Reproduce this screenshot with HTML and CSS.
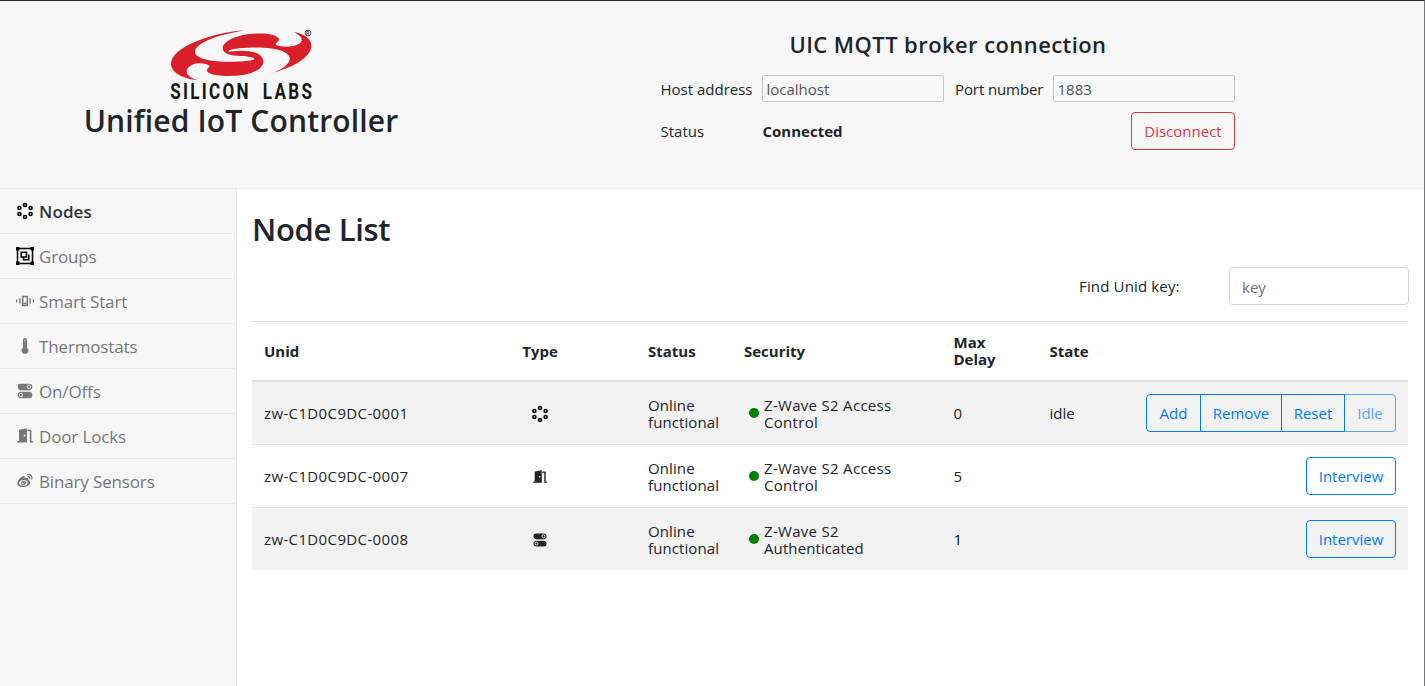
FILE: index.html
```html
<!DOCTYPE html>
<html lang="en">
<head>
<meta charset="utf-8">
<title>Unified IoT Controller</title>
<link rel="stylesheet" href="styles.css">
</head>
<body>
<svg class="defs" aria-hidden="true">
  <symbol id="i-nodes" viewBox="0 0 18 18"><g fill="none" stroke="#000" stroke-width="1.6"><circle cx="9" cy="3" r="1.5"/><circle cx="14.600" cy="6" r="1.500"/><circle cx="14.600" cy="12" r="1.500"/><circle cx="9" cy="15" r="1.500"/><circle cx="3.400" cy="12" r="1.500"/><circle cx="3.400" cy="6" r="1.500"/></g></symbol>
  <symbol id="i-groups" viewBox="0 0 18 18"><path d="M1.500 1.500h15v15h-15z" fill="none" stroke="#000" stroke-width="1.500"/><path d="M0 0h3.500v3.500H0zM14.500 0H18v3.500h-3.500zM0 14.500h3.500V18H0zM14.500 14.500H18V18h-3.500z" fill="#000"/><path d="M5.200 5.200h5.300v4.800H5.200zM12.800 7.500v5.200H7.500V10" fill="none" stroke="#000" stroke-width="1.500"/></symbol>
  <symbol id="i-smart" viewBox="0 0 18 18"><path d="M6.700 4.500h4.600v9H6.700z" fill="none" stroke="currentColor" stroke-width="1.500" stroke-linejoin="round"/><path d="M7.500 11.500h3M3.900 6.200v5.600M14.100 6.200v5.600M.6 7.500v3M17.400 7.500v3" fill="none" stroke="currentColor" stroke-width="1.300"/></symbol>
  <symbol id="i-thermo" viewBox="0 0 18 18"><path d="M7 3a2 2 0 0 1 4 0v7.500a3.500 3.500 0 1 1-4 0z" fill="currentColor"/><path d="M9 2.500v2" stroke="#ddd"/></symbol>
  <symbol id="i-onoff" viewBox="0 0 18 18"><rect x="1.700" y="1.700" width="14.600" height="6.200" rx="3.100" fill="currentColor"/><rect x="1.700" y="10" width="14.600" height="6.200" rx="3.100" fill="currentColor"/><circle cx="13" cy="4.800" r="1.700" fill="none" stroke="#eee"/><circle cx="5" cy="13.100" r="1.700" fill="none" stroke="#eee"/><path d="M4 8.900h10" stroke="currentColor" stroke-width=".6"/></symbol>
  <symbol id="i-door" viewBox="0 0 18 18"><path d="M3 2.800 11 1.300V15.500H1.300v-1.500H3zM11.500 2.800h3.900v11.200h1.400v1.500h-3V4.300h-2.300z" fill="currentColor"/><circle cx="8.600" cy="8.700" r=".9" fill="#fff"/></symbol>
  <symbol id="i-sensor" viewBox="0 0 18 18"><path fill-rule="evenodd" fill="currentColor" d="M7 4.200c1.200-.4 2.200.4 1.700 2 2.200-.8 4.300-.4 3.600 1.700 4 1.300 2.100 6.900-5 7.100C3 15.100 1.300 13 1.400 11.200 1.500 8.500 4.700 5 7 4.200zM7.300 8c-2.600.2-4.300 1.600-4.200 3.300.2 1.500 2 2.600 4.400 2.400 2.600-.2 4.400-1.700 4.200-3.300C11.500 8.800 9.700 7.800 7.300 8z"/><path fill-rule="evenodd" fill="currentColor" d="M7.600 8.700c1.800 0 2.800 1.500 2.200 2.900-.7 1.500-2.700 2-4 1.200-1.200-.7-1.200-2.200-.4-3.100.6-.7 1.400-1 2.200-1zM6.500 10.500a1 1 0 1 0 .1 2 1 1 0 0 0-.1-2z"/><path d="M11.500 2.500c3-.6 5.200 1.800 4.300 4.700M11.900 4.700c1.400-.3 2.300.8 1.900 2" fill="none" stroke="currentColor" stroke-width="1.100" stroke-linecap="round"/></symbol>
</svg>
<div class="app">
  <header class="header">
    <div class="brand">
      <svg class="logo" viewBox="0 0 495 255">
        <path fill="#da1f2b" d="M255 31C165 36 33 80 33 132C33 158 70 177 112 180C85 172 75 158 82 146C90 134 108 128 124 130C138 132 152 136 148 141C142 146 136 150 146 158C165 170 220 169 250 165C290 158 311 140 310 124C308 104 285 92 240 92C220 92 205 97 205 94C208 84 290 80 330 85C385 91 397 112 385 128C375 143 350 155 325 161C400 145 454 110 454 78C454 55 432 42 402 36C425 48 432 60 418 71C400 82 365 82 350 76C340 71 358 66 357 57C350 42 310 38 270 42C225 47 188 65 188 85C189 103 215 107 240 108C265 109 283 112 283 117C280 124 220 126 190 125C140 124 105 112 105 96C105 70 170 45 255 31Z"/>
        <circle cx="444" cy="39" r="8.500" fill="none" stroke="#444" stroke-width="3"/>
        <text class="reg" x="439" y="44">R</text>
        <text class="word" transform="translate(31 237) scale(.8 1)" textLength="293">SILICON</text>
        <text class="word" transform="translate(308 237) scale(.8 1)" textLength="185">LABS</text>
      </svg>
      <h1 class="title">Unified IoT Controller</h1>
    </div>
    <section class="broker">
      <h2 class="broker-title">UIC MQTT broker connection</h2>
      <div class="broker-row">
        <label class="lbl-host">Host address</label><input class="field" value="localhost" disabled>
        <label class="lbl-port">Port number</label><input class="field" value="1883" disabled>
      </div>
      <div class="broker-row status-row">
        <span class="lbl-host">Status</span><b class="connected">Connected</b>
        <button class="btn danger">Disconnect</button>
      </div>
    </section>
  </header>
  <div class="body">
    <nav class="side">
      <a class="item active"><svg><use href="#i-nodes"/></svg><span>Nodes</span></a>
      <a class="item"><svg><use href="#i-groups"/></svg><span>Groups</span></a>
      <a class="item"><svg><use href="#i-smart"/></svg><span>Smart Start</span></a>
      <a class="item"><svg><use href="#i-thermo"/></svg><span>Thermostats</span></a>
      <a class="item"><svg><use href="#i-onoff"/></svg><span>On/Offs</span></a>
      <a class="item"><svg><use href="#i-door"/></svg><span>Door Locks</span></a>
      <a class="item"><svg><use href="#i-sensor"/></svg><span>Binary Sensors</span></a>
    </nav>
    <main class="main">
      <h2 class="page-title">Node List</h2>
      <div class="search"><label>Find Unid key:</label><input class="key" placeholder="key"></div>
      <div class="table">
        <div class="row head"><span>Unid</span><span class="type">Type</span><span>Status</span><span>Security</span><span>Max<br>Delay</span><span>State</span><span></span></div>
        <div class="row odd"><span class="unid">zw-C1D0C9DC-0001</span><span class="type"><svg class="big"><use href="#i-nodes"/></svg></span><span class="status">Online<br>functional</span><span class="sec"><i class="dot"></i><span>Z-Wave S2 Access<br>Control</span></span><span>0</span><span>idle</span>
          <span class="actions"><span class="group"><button class="btn add">Add</button><button class="btn remove">Remove</button><button class="btn reset">Reset</button><button class="btn off" disabled>Idle</button></span></span></div>
        <div class="row"><span class="unid">zw-C1D0C9DC-0007</span><span class="type"><svg><use href="#i-door"/></svg></span><span class="status">Online<br>functional</span><span class="sec"><i class="dot"></i><span>Z-Wave S2 Access<br>Control</span></span><span>5</span><span></span><span class="actions"><button class="btn">Interview</button></span></div>
        <div class="row odd"><span class="unid">zw-C1D0C9DC-0008</span><span class="type"><svg><use href="#i-onoff"/></svg></span><span class="status">Online<br>functional</span><span class="sec"><i class="dot"></i><span>Z-Wave S2<br><span class="auth">Authenticated</span></span></span><span class="navy">1</span><span></span><span class="actions"><button class="btn">Interview</button></span></div>
      </div>
    </main>
  </div>
</div>
</body>
</html>
```
FILE: styles.css
```css
* { box-sizing: border-box; }
body { margin: 0; font: 15px/24px "Open Sans", sans-serif; color: #212529; background: #fff; letter-spacing: 0; }
h1, h2 { margin: 0; font-weight: 600; }
.defs { position: absolute; width: 0; height: 0; }
.app { height: 686px; display: flex; flex-direction: column; border-top: 1px solid #29272b; border-right: 1px solid #77777a; overflow: hidden; }
.header { height: 188px; flex: none; display: flex; background: #f7f7f7; border-bottom: 1px solid #ebebeb; }
.brand { width: 482px; padding-top: 19px; display: flex; flex-direction: column; align-items: center; }
.logo { width: 165px; height: 85px; display: block; margin-left: 3px; }
.reg { font: bold 14px Roboto, sans-serif; fill: #444; letter-spacing: 0; }
.word { font: 700 64px Roboto, sans-serif; fill: #161616; letter-spacing: 0; }
.title { font-size: 30px; line-height: 38px; margin-top: -3px; white-space: nowrap; letter-spacing: 0.15px; }
.broker { margin-left: 178px; width: 575px; padding-top: 29px; }
.broker-title { font-size: 22px; line-height: 29px; text-align: center; margin-left: 1px; letter-spacing: 0.42px; }
.broker-row { display: flex; align-items: center; margin-top: 16px; white-space: nowrap; }
.status-row { margin-top: 10px; }
.lbl-host { width: 102px; padding-left: 0.5px; }
.lbl-port { width: 109px; padding-left: 11px; letter-spacing: -0.1px; }
input, button { font: inherit; letter-spacing: inherit; color: inherit; }
.field { width: 182px; height: 27px; padding: 0 3.5px; border: 1px solid #c8c8c8; border-radius: 2px; background: #f7f7f7; color: #545454; }
.connected { font-weight: 700; padding-left: 0.5px; }
.btn { height: 38px; padding: 0 12px; border: 1px solid #007bff; border-radius: 4px; background: transparent; color: #007bff; white-space: nowrap; }
.danger { border-color: #dc3545; color: #dc3545; margin-left: auto; width: 104px; }
.body { flex: 1; display: flex; }
.side { width: 237px; flex: none; background: #f7f7f7; border-right: 1px solid #ebebeb; }
.item { height: 45px; display: flex; align-items: center; gap: 5px; padding-left: 16px; border-bottom: 1px solid #ebebeb; font-size: 17px; color: #777; letter-spacing: -0.15px; }
.item svg { width: 18px; height: 18px; }
.item span { padding-top: 2px; }
.active { font-weight: 600; color: #333; letter-spacing: 0.1px; }
.main { flex: 1; min-width: 0; padding: 20px 16px 0 15px; }
.page-title { font-size: 31px; line-height: 40px; letter-spacing: -0.35px; }
.search { display: flex; justify-content: flex-end; align-items: center; margin: 18px -1px 16px 0; }
.search label { width: 150px; letter-spacing: 0.15px; }
.key { width: 180px; height: 38px; border: 1px solid #ced4da; border-radius: 4px; padding: 2px 12px 0; }
.key::placeholder { color: #6c757d; opacity: 1; }
.row { display: grid; grid-template-columns: 228px 156px 96px 209.5px 96px 90px minmax(0, 1fr); align-items: center; height: 63px; padding: 0 12px; border-top: 1px solid #dee2e6; line-height: 17px; }
.head { height: 61px; font-weight: 700; border-bottom: 2px solid #dee2e6; }
.head + .row { border-top: 0; height: 62px; }
.odd { background: #f2f2f2; }
.unid { letter-spacing: 0.37px; }
.status { padding-top: 1px; letter-spacing: 0.1px; }
.type { text-align: center; padding-right: 60px; }
.type svg { width: 16px; height: 16px; display: inline-block; vertical-align: middle; }
.type .big { width: 18px; height: 18px; margin-top: 1px; }
.sec { display: flex; align-items: center; padding-left: 5px; gap: 5px; letter-spacing: 0.3px; }
.sec > span { padding-top: 1px; }
.auth { letter-spacing: 0.1px; }
.dot { width: 10px; height: 10px; border-radius: 50%; background: #008000; }
.navy { color: #000080; }
.actions { display: flex; justify-content: flex-end; }
.actions > .btn { width: 90px; padding: 0; }
.group { display: flex; }
.group .btn { border-radius: 0; margin-left: -1px; padding: 0; }
.group .add { border-radius: 4px 0 0 4px; margin-left: 0; width: 55px; }
.group .remove { width: 82px; }
.group .reset { width: 64px; }
.group .off { border-radius: 0 4px 4px 0; width: 52px; opacity: .65; }
.group .btn:not(.off) { position: relative; z-index: 1; }
```
